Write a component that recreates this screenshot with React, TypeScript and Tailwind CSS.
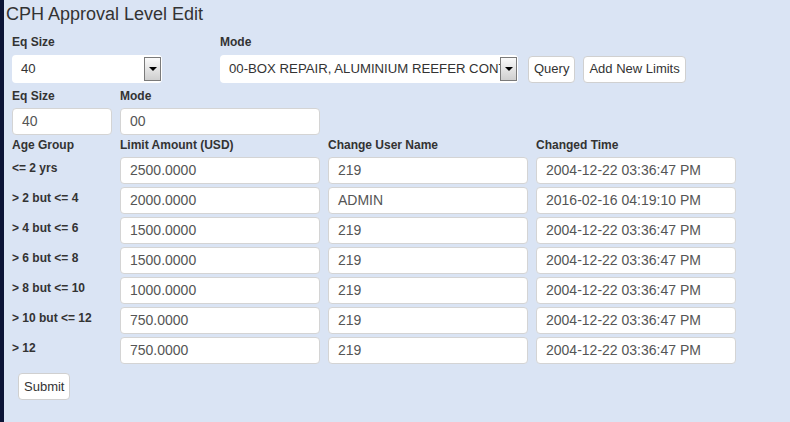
const rows = [
  { age: "<= 2 yrs", limit: "2500.0000", user: "219", time: "2004-12-22 03:36:47 PM" },
  { age: "> 2 but <= 4", limit: "2000.0000", user: "ADMIN", time: "2016-02-16 04:19:10 PM" },
  { age: "> 4 but <= 6", limit: "1500.0000", user: "219", time: "2004-12-22 03:36:47 PM" },
  { age: "> 6 but <= 8", limit: "1500.0000", user: "219", time: "2004-12-22 03:36:47 PM" },
  { age: "> 8 but <= 10", limit: "1000.0000", user: "219", time: "2004-12-22 03:36:47 PM" },
  { age: "> 10 but <= 12", limit: "750.0000", user: "219", time: "2004-12-22 03:36:47 PM" },
  { age: "> 12", limit: "750.0000", user: "219", time: "2004-12-22 03:36:47 PM" },
];

function Field({ value, width }: { value: string; width: string }) {
  return (
    <div
      className={`${width} h-[27px] bg-white border border-[#d4d4d4] rounded-[4px] pl-[9px] flex items-center text-[14px] text-[#555] whitespace-nowrap overflow-hidden`}
    >
      {value}
    </div>
  );
}

function Select({ value, width }: { value: string; width: string }) {
  return (
    <div className={`${width} h-[28px] bg-white rounded-[4px] flex items-center pl-[9px] pr-[1px] text-[13.2px] text-[#333]`}>
      <span className="flex-1 min-w-0 whitespace-nowrap">{value}</span>
      <span className="w-[17px] h-[24px] shrink-0 border border-[#7a7a7a] bg-gradient-to-b from-[#fafafa] to-[#cfcfcf] flex items-center justify-center">
        <span className="w-0 h-0 border-l-[4px] border-r-[4px] border-t-[4px] border-l-transparent border-r-transparent border-t-black" />
      </span>
    </div>
  );
}

function Button({ label }: { label: string }) {
  return (
    <button className="h-[27px] px-[5px] bg-white border border-[#d0d0d0] rounded-[4px] text-[13px] text-[#333]">
      {label}
    </button>
  );
}

export default function App() {
  return (
    <div className="w-[790px] h-[422px] flex bg-[#dae4f4] font-['Liberation_Sans',Arial,sans-serif]">
      <div className="w-[4px] bg-[#0b1436]" />
      <div className="flex-1 pl-[2px]">
        <h1 className="text-[18px] leading-[20px] text-[#333] pt-[4px]">CPH Approval Level Edit</h1>

        <div className="pl-[6px]">
          {/* Query bar */}
          <div className="flex items-end mt-[11px]">
            <div className="w-[208px]">
              <div className="text-[12px] font-bold text-[#333] leading-[14px] mb-[6px]">Eq Size</div>
              <Select value="40" width="w-[150px]" />
            </div>
            <div>
              <div className="text-[12px] font-bold text-[#333] leading-[14px] mb-[6px]">Mode</div>
              <div className="flex items-center gap-[10px]">
                <Select value="00-BOX REPAIR, ALUMINIUM REEFER CONT" width="w-[298px]" />
                <div className="flex gap-[8px]">
                  <Button label="Query" />
                  <Button label="Add New Limits" />
                </div>
              </div>
            </div>
          </div>

          {/* Current selection */}
          <div className="flex mt-[6px]">
            <div className="w-[108px]">
              <div className="text-[12px] font-bold text-[#333] leading-[14px] mb-[5px]">Eq Size</div>
              <Field value="40" width="w-[100px]" />
            </div>
            <div>
              <div className="text-[12px] font-bold text-[#333] leading-[14px] mb-[5px]">Mode</div>
              <Field value="00" width="w-[200px]" />
            </div>
          </div>

          {/* Limits table */}
          <div className="grid grid-cols-[108px_208px_208px_208px] mt-[3px] text-[12px] font-bold text-[#333] leading-[14px]">
            <div>Age Group</div>
            <div>Limit Amount (USD)</div>
            <div>Change User Name</div>
            <div>Changed Time</div>
          </div>
          <div className="mt-[5px] flex flex-col gap-[3px]">
            {rows.map((r) => (
              <div key={r.age} className="grid grid-cols-[108px_208px_208px_208px] items-center">
                <div className="text-[12px] font-bold text-[#333] -mt-[5px]">{r.age}</div>
                <Field value={r.limit} width="w-[200px]" />
                <Field value={r.user} width="w-[200px]" />
                <Field value={r.time} width="w-[200px]" />
              </div>
            ))}
          </div>

          <div className="mt-[9px] pl-[6px]">
            <Button label="Submit" />
          </div>
        </div>
      </div>
    </div>
  );
}
